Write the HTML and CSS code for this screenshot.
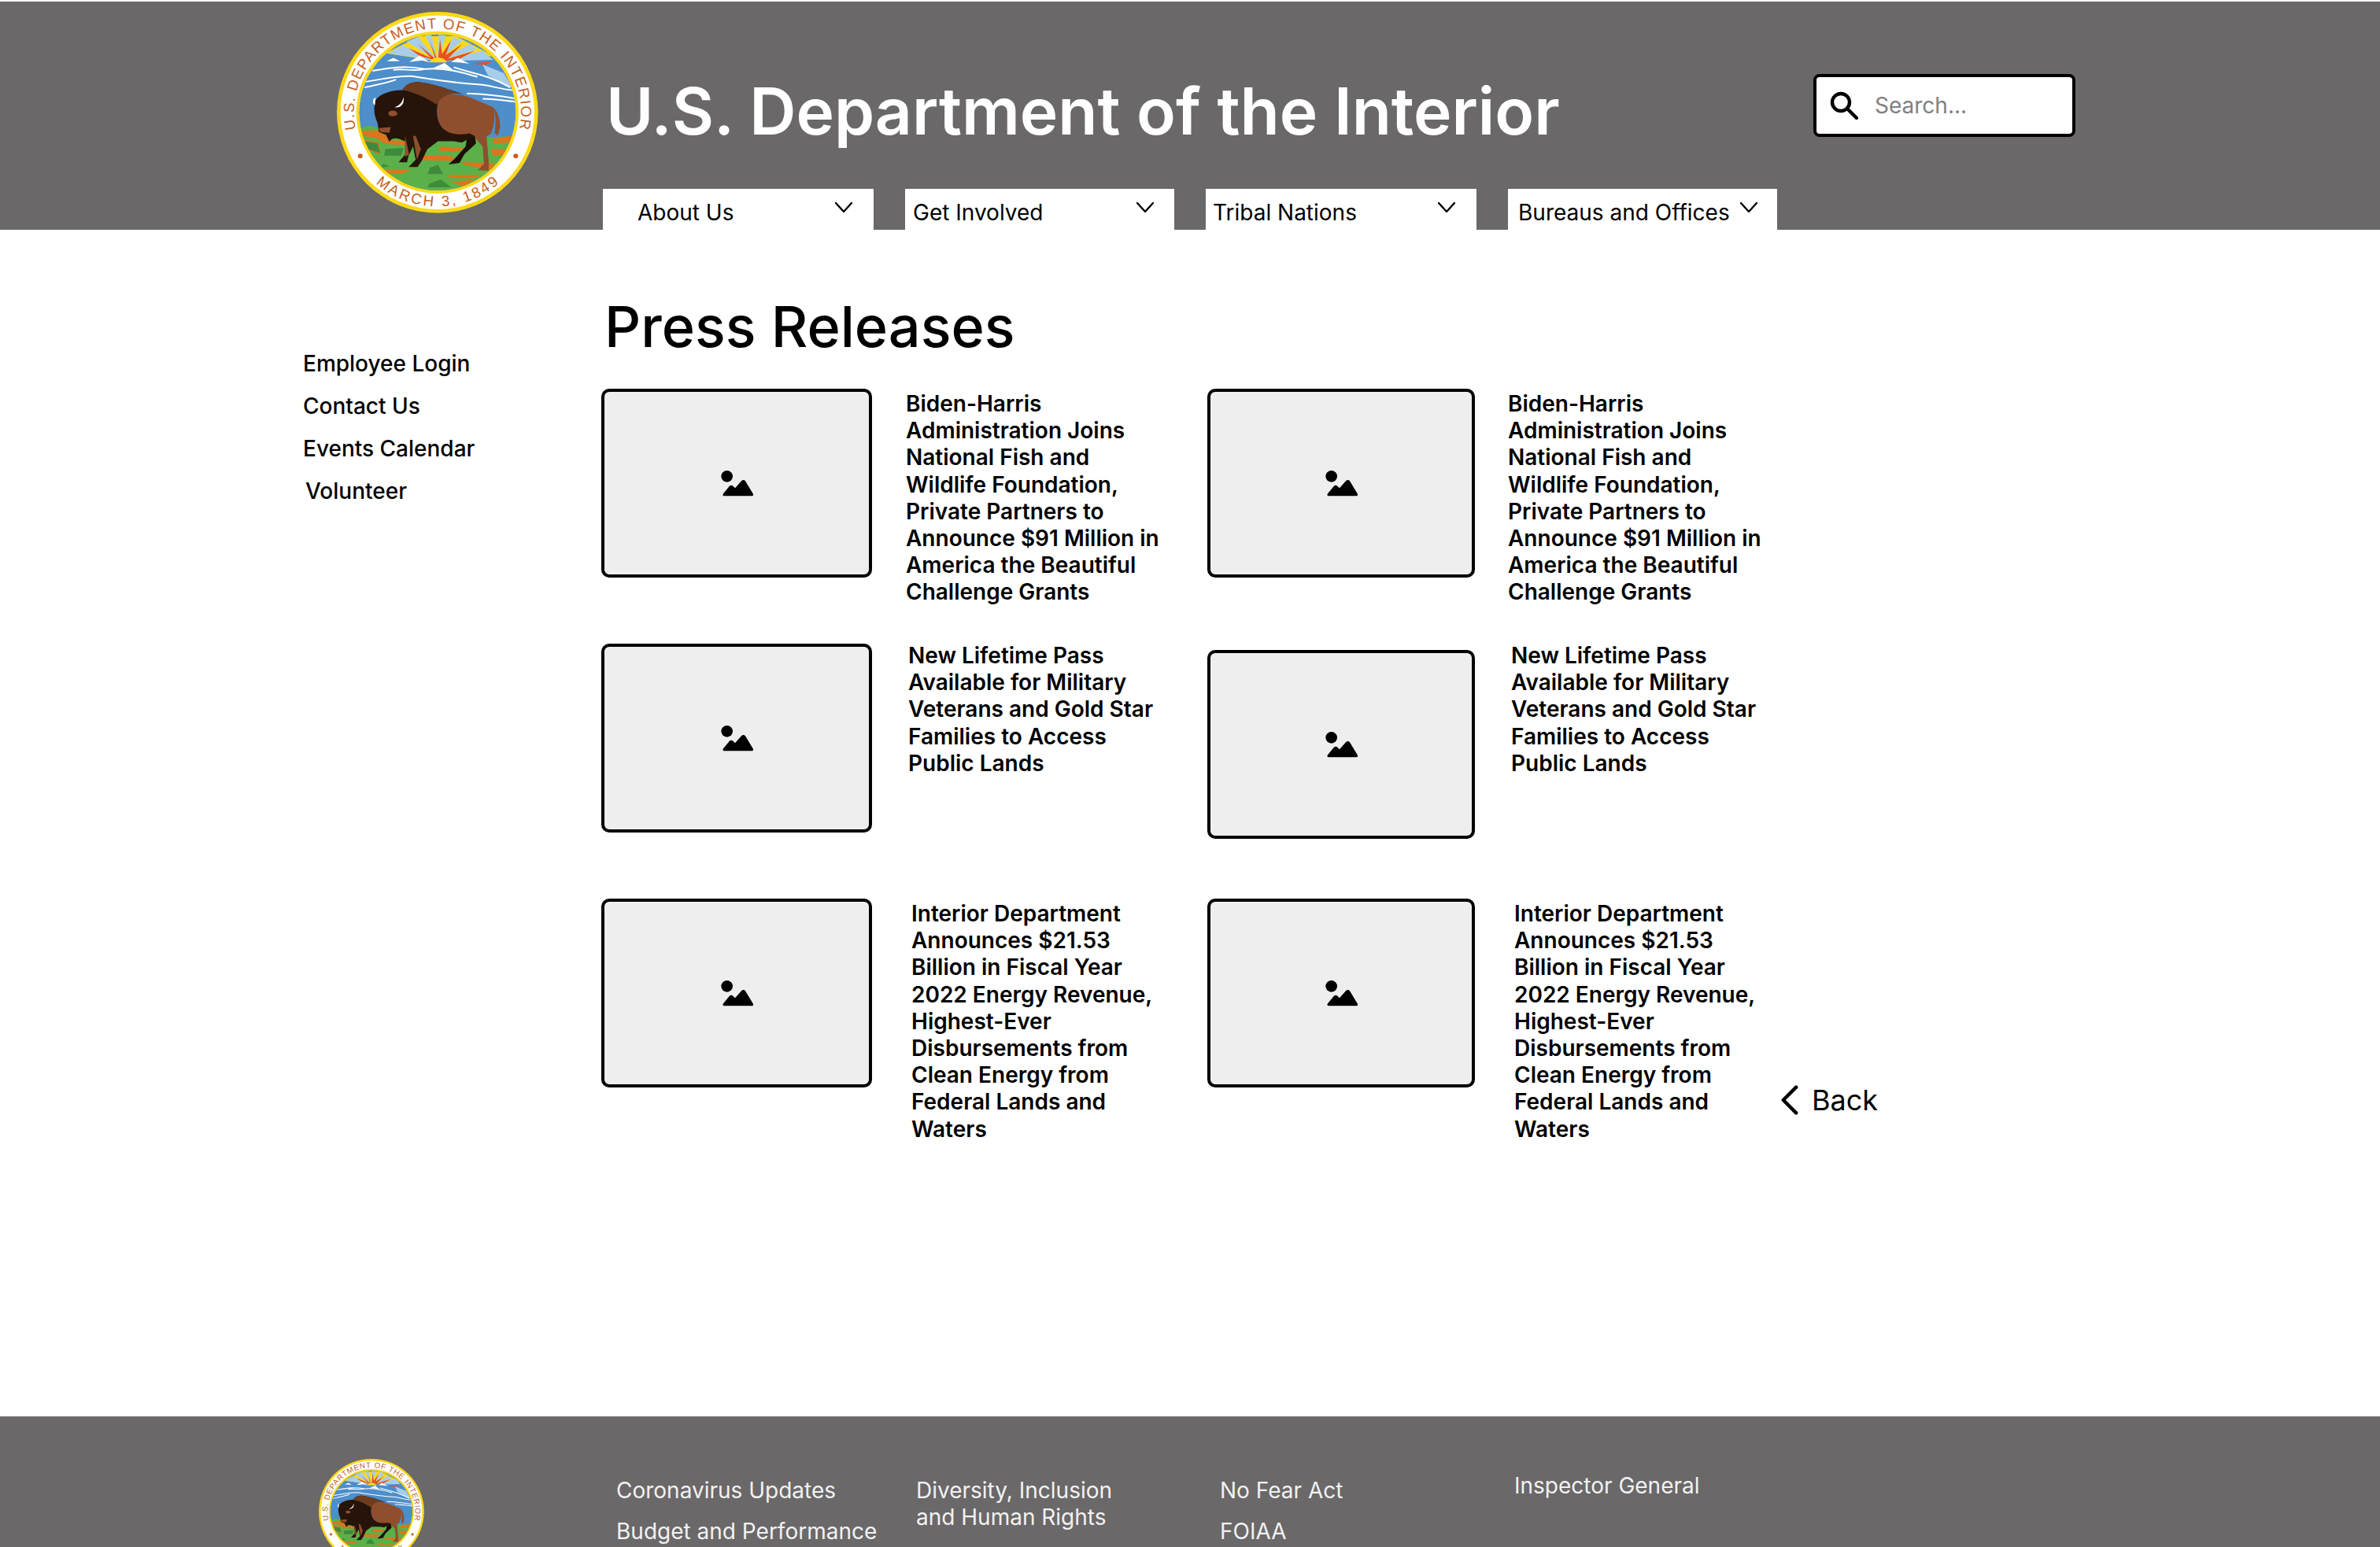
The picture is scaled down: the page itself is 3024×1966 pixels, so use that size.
FILE: index.html
```html
<!DOCTYPE html>
<html lang="en">
<head>
<meta charset="utf-8">
<title>Press Releases - U.S. Department of the Interior</title>
<link rel="stylesheet" href="styles.css">
</head>
<body>
<svg class="defs" aria-hidden="true">
  <defs>
    <clipPath id="seal-clip"><circle cx="468" cy="430" r="297"/></clipPath>
    <path id="seal-top" d="M157 495 A318 318 0 1 1 779 495"/>
    <path id="seal-bottom" d="M233 700 A358 358 0 0 0 703 700"/>
    <symbol id="seal" viewBox="85 47 767 767">
      <circle cx="468" cy="430" r="383" fill="#fcd917"/>
      <circle cx="468" cy="430" r="369" fill="#fff"/>
      <circle cx="468" cy="430" r="309" fill="#fcd917"/>
      <g clip-path="url(#seal-clip)">
        <rect x="160" y="120" width="620" height="620" fill="#4d8ecb"/>
        <path d="M470 235 L270 205 L400 140 L540 140 L680 215 Z" fill="#fcd917"/>
        <path d="M470 235 L280 205 L335 175 Z M470 235 L350 160 L395 143 Z M470 235 L420 135 L445 135 Z M470 235 L472 135 L500 137 Z M470 235 L530 145 L565 155 Z M470 235 L590 170 L620 190 Z M470 235 L640 195 L680 230 Z" fill="#a8cdea"/>
        <path d="M470 235 L358 185 L400 215 Z M470 235 L395 170 L445 225 Z M470 235 L437 155 L460 225 Z M470 232 L478 152 L488 225 Z M470 232 L520 155 L495 225 Z M470 232 L562 170 L505 228 Z M475 235 L610 195 L545 230 Z M600 245 L675 235 L650 250 Z M305 225 L355 235 L320 240 Z" fill="#e8501f"/>
        <path d="M437 240 C445 215 495 215 505 240 Z" fill="#fcd917"/>
        <path d="M640 248 L720 280 L760 345 L660 290 Z" fill="#a8cdea"/>
        <path d="M160 350 L250 235 L300 225 L360 235 L400 215 L440 240 L500 240 L540 225 L590 245 L660 290 L780 350 L780 540 L160 540 Z" fill="#4d8ecb"/>
        <path d="M360 238 L400 213 L440 240 L410 232 Z M520 238 L545 222 L590 245 L555 240 Z M275 235 L300 222 L325 235 Z M450 262 L495 242 L530 270 L490 262 Z" fill="#fff"/>
        <path d="M220 272 C290 260 340 250 420 265 C480 258 560 275 620 295 M300 268 C340 262 370 275 420 265 M180 315 C260 305 300 290 370 292 C450 305 560 320 640 325 C680 330 720 345 760 345 M190 335 C230 325 270 320 310 305 M530 258 C590 280 660 285 745 335 M580 358 C640 360 700 365 770 378 M640 378 C680 378 720 385 770 390" fill="none" stroke="#fff" stroke-width="6"/>
        <path d="M160 495 L205 480 L250 490 L690 525 L780 515 L780 740 L160 740 Z" fill="#5bb04a"/>
        <path d="M180 500 L245 498 L290 535 L350 540 L345 555 L270 550 L230 525 L180 520 Z M180 530 L245 545 L250 590 L205 575 Z" fill="#d9761e"/>
        <path d="M190 540 L240 548 L250 585 L205 570 Z M270 570 L340 565 L330 595 L265 595 Z" fill="#3f8a3c"/>
        <path d="M380 595 L520 595 L540 615 L400 612 Z M480 560 L570 565 L550 580 L470 575 Z M680 530 L750 520 L745 545 L680 548 Z M670 570 L740 570 L720 595 L680 595 Z M560 620 L690 622 L670 650 L570 630 Z M260 645 L370 650 L330 665 L275 660 Z M500 668 L640 668 L610 680 L520 680 Z M520 695 L610 685 L570 712 Z" fill="#d9761e"/>
        <path d="M440 640 L470 630 L490 665 L430 665 Z M440 700 L480 685 L520 715 L430 715 Z M260 625 L285 635 L255 640 Z" fill="#3f8a3c"/>
        <path d="M680 412 C698 425 708 460 706 490 L698 518 L686 510 C690 470 692 440 680 412Z" fill="#8f4f2e"/>
        <path d="M470 385 C490 355 540 355 590 372 L680 410 C692 440 682 490 670 512 L655 522 L664 628 L662 652 L622 650 L645 625 L640 560 L600 515 C560 522 510 525 480 480 C465 450 465 420 470 385Z" fill="#8f4f2e"/>
        <path d="M610 520 L615 548 L570 590 L552 622 L510 628 L535 605 L575 560 L580 530 Z" fill="#1c0f08"/>
        <path d="M232 385 C250 355 300 345 335 345 C345 325 370 312 400 315 C450 320 520 345 570 362 C520 350 485 360 472 385 C462 420 465 455 480 480 C500 510 540 520 590 510 L610 520 L560 545 L530 540 L470 540 L430 570 L408 615 L392 638 L358 638 L385 610 L375 560 L358 595 L352 620 L320 620 L345 590 L345 540 C320 530 300 520 285 542 L272 515 L245 505 L240 470 C225 440 225 410 232 385Z" fill="#26140a"/>
        <path d="M335 345 C345 325 370 312 400 315 C450 320 500 340 555 358 C510 355 480 370 465 400 C420 370 370 350 335 345Z" fill="#6e3c1f"/>
        <path d="M345 520 L360 590 L345 600 L345 540 Z M375 520 L390 610 L405 570 L385 520 Z" fill="#8f4f2e"/>
        <path d="M338 372 C345 400 325 415 305 410 C320 405 335 395 338 372Z M232 372 C220 380 220 395 230 403 Z" fill="#fff"/>
        <ellipse cx="298" cy="434" rx="17" ry="11" fill="#8f4f2e"/>
        <path d="M245 490 L290 486 L285 508 L250 505 Z" fill="#8f4f2e"/>
      </g>
      <g class="seal-text">
        <text><textPath href="#seal-top" textLength="1130" lengthAdjust="spacing">U.S. DEPARTMENT OF THE INTERIOR</textPath></text>
        <text><textPath href="#seal-bottom" textLength="512" lengthAdjust="spacing">MARCH 3, 1849</textPath></text>
      </g>
      <circle cx="174" cy="596" r="9" fill="#c5601c"/>
      <circle cx="766" cy="596" r="9" fill="#c5601c"/>
    </symbol>
    <symbol id="picture" viewBox="520 350 135 105">
      <circle cx="549" cy="375" r="22"/>
      <path d="M538 450 C533 450 532 445 535 441 L558 413 C562 408 568 408 572 412 L580 420 L604 393 C609 388 615 388 619 393 L648 441 C651 446 649 450 644 450 Z"/>
    </symbol>
  </defs>
</svg>

<header class="site-header">
  <svg class="seal-large"><use href="#seal"/></svg>
  <div class="header-main">
    <h1 class="site-title">U.S. Department of the Interior</h1>
    <nav class="tabs">
      <a class="tab tab-about">About Us<svg class="chev" viewBox="0 0 22 13"><path d="M1 1 L11 12 L21 1"/></svg></a>
      <a class="tab tab-involved">Get Involved<svg class="chev" viewBox="0 0 22 13"><path d="M1 1 L11 12 L21 1"/></svg></a>
      <a class="tab tab-tribal">Tribal Nations<svg class="chev" viewBox="0 0 22 13"><path d="M1 1 L11 12 L21 1"/></svg></a>
      <a class="tab tab-bureaus">Bureaus and Offices<svg class="chev" viewBox="0 0 22 13"><path d="M1 1 L11 12 L21 1"/></svg></a>
    </nav>
  </div>
  <div class="search">
    <svg class="search-icon" viewBox="0 0 36 36"><circle cx="14" cy="14" r="11"/><path d="M22 22 L34 34"/></svg>
    <span class="search-text">Search...</span>
  </div>
</header>

<main class="page">
  <aside class="side">
    <a class="side-link">Employee Login</a>
    <a class="side-link">Contact Us</a>
    <a class="side-link">Events Calendar</a>
    <a class="side-link side-volunteer">Volunteer</a>
  </aside>
  <section class="content">
    <h2 class="content-title">Press Releases</h2>
    <div class="releases">
      <article class="release row-a left">
        <div class="thumb"><svg class="pic"><use href="#picture"/></svg></div>
        <p class="release-text">Biden-Harris Administration Joins National Fish and Wildlife Foundation, Private Partners to Announce $91 Million in America the Beautiful Challenge Grants</p>
      </article>
      <article class="release row-a right">
        <div class="thumb"><svg class="pic"><use href="#picture"/></svg></div>
        <p class="release-text">Biden-Harris Administration Joins National Fish and Wildlife Foundation, Private Partners to Announce $91 Million in America the Beautiful Challenge Grants</p>
      </article>
      <article class="release row-b left">
        <div class="thumb"><svg class="pic"><use href="#picture"/></svg></div>
        <p class="release-text">New Lifetime Pass Available for Military Veterans and Gold Star Families to Access Public Lands</p>
      </article>
      <article class="release row-b right">
        <div class="thumb"><svg class="pic"><use href="#picture"/></svg></div>
        <p class="release-text">New Lifetime Pass Available for Military Veterans and Gold Star Families to Access Public Lands</p>
      </article>
      <article class="release row-c left">
        <div class="thumb"><svg class="pic"><use href="#picture"/></svg></div>
        <p class="release-text">Interior Department Announces $21.53 Billion in Fiscal Year 2022 Energy Revenue, Highest-Ever Disbursements from Clean Energy from Federal Lands and Waters</p>
      </article>
      <article class="release row-c right">
        <div class="thumb"><svg class="pic"><use href="#picture"/></svg></div>
        <p class="release-text">Interior Department Announces $21.53 Billion in Fiscal Year 2022 Energy Revenue, Highest-Ever Disbursements from Clean Energy from Federal Lands and Waters</p>
      </article>
    </div>
  </section>
  <a class="back"><svg class="back-icon" viewBox="0 0 24 42"><path d="M21 3 L3 21 L21 39"/></svg>Back</a>
</main>

<footer class="site-footer">
  <svg class="seal-small"><use href="#seal"/></svg>
  <div class="foot-col foot-a">
    <a class="foot-link">Coronavirus Updates</a>
    <a class="foot-link">Budget and Performance</a>
  </div>
  <div class="foot-col foot-b">
    <a class="foot-link">Diversity, Inclusion<br>and Human Rights</a>
  </div>
  <div class="foot-col foot-c">
    <a class="foot-link">No Fear Act</a>
    <a class="foot-link">FOIAA</a>
  </div>
  <div class="foot-col foot-d">
    <a class="foot-link">Inspector General</a>
  </div>
</footer>
</body>
</html>
```
FILE: styles.css
```css
* { box-sizing: border-box; }
html, body { height: 1966px; overflow: hidden; }
body {
  margin: 0;
  padding-top: 2px;
  background: #fff;
  color: #000;
  font-family: Inter, "Liberation Sans", sans-serif;
}
.defs { position: absolute; width: 0; height: 0; }
.seal-text { font-family: "Liberation Sans", sans-serif; font-size: 56px; font-weight: 400; fill: #c5601c; }

.site-header {
  display: flex;
  height: 290px;
  padding-left: 428px;
  background: #6a6869;
}
.seal-large { flex: none; width: 256px; height: 256px; margin-top: 13px; }
.header-main {
  display: flex;
  flex-direction: column;
  justify-content: space-between;
  width: 1492px;
  margin-left: 82px;
}
.site-title {
  margin: 90px 0 0 4px;
  color: #fff;
  font-size: 82px;
  line-height: 100px;
  font-weight: 600;
  white-space: nowrap;
}
.tabs { display: flex; gap: 40px; }
.tab {
  display: flex;
  align-items: center;
  justify-content: space-between;
  height: 52px;
  padding-top: 8px;
  background: #fff;
  font-size: 28px;
  line-height: 34px;
  white-space: nowrap;
}
.tab-about { width: 344px; padding-left: 44px; padding-right: 27px; }
.tab-involved { width: 342px; padding-left: 10px; padding-right: 26px; }
.tab-tribal { width: 344px; padding-left: 9px; padding-right: 27px; }
.tab-bureaus { width: 342px; padding-left: 13px; padding-right: 25px; }
.chev { width: 22px; height: 13px; margin-top: -14px; fill: none; stroke: #000; stroke-width: 2.4; stroke-linecap: round; stroke-linejoin: round; }

.search {
  display: flex;
  align-items: center;
  width: 333px;
  height: 80px;
  margin: 92px 0 0 46px;
  padding-left: 17px;
  background: #fff;
  border: 4px solid #000;
  border-radius: 8px;
}
.search-icon { width: 36px; height: 36px; fill: none; stroke: #000; stroke-width: 4.4; stroke-linecap: round; }
.search-text { margin-left: 21px; font-size: 28px; color: #808080; }

.page { display: flex; height: 1508px; }
.side {
  display: flex;
  flex-direction: column;
  align-items: flex-start;
  gap: 20px;
  width: 379px;
  margin-left: 385px;
  padding-top: 153px;
}
.side-link { font-size: 28px; line-height: 34px; font-weight: 500; }
.side-volunteer { margin-left: 3px; }

.content { width: 1494px; }
.content-title {
  margin: 83px 0 39px 4px;
  font-size: 72px;
  line-height: 80px;
  font-weight: 500;
}
.releases { display: grid; grid-template-columns: 770px 1fr; grid-auto-rows: 324px; }
.release { display: flex; align-items: flex-start; }
.thumb {
  display: flex;
  align-items: center;
  justify-content: center;
  flex: none;
  height: 240px;
  background: #eee;
  border: 4px solid #000;
  border-radius: 10px;
}
.left .thumb { width: 344px; }
.right .thumb { width: 340px; }
.pic { width: 45px; height: 35px; fill: #000; }
.release-text {
  width: 330px;
  margin: 2px 0 0;
  font-size: 28px;
  line-height: 34.2px;
  font-weight: 600;
}
.left .release-text { margin-left: 43px; }
.right .release-text { margin-left: 42px; }
.row-b .release-text { margin-top: -2px; }
.row-b.left .release-text { margin-left: 46px; }
.row-b.right .release-text { margin-left: 46px; }
.row-b.right .thumb { margin-top: 8px; }
.row-b.right .release-text { margin-top: -2px; }
.row-c.left .release-text { margin-left: 50px; }
.row-c.right .release-text { margin-left: 50px; }

.back {
  display: flex;
  align-items: center;
  align-self: flex-start;
  gap: 17px;
  margin: 1087px 0 0 5px;
  font-size: 36px;
  line-height: 38px;
}
.back-icon { width: 22px; height: 38px; fill: none; stroke: #000; stroke-width: 5; stroke-linecap: round; stroke-linejoin: round; }

.site-footer {
  display: flex;
  align-items: flex-start;
  height: 166px;
  padding-left: 405px;
  background: #6a6869;
  color: #f2f2f2;
  overflow: hidden;
}
.seal-small { flex: none; width: 134px; height: 134px; margin-top: 54px; }
.foot-col { display: flex; flex-direction: column; gap: 18px; padding-top: 77px; }
.foot-a { width: 381px; margin-left: 244px; }
.foot-b { width: 386px; }
.foot-c { width: 374px; }
.foot-d { padding-top: 71px; }
.foot-link { font-size: 28px; line-height: 34px; white-space: nowrap; }
```
